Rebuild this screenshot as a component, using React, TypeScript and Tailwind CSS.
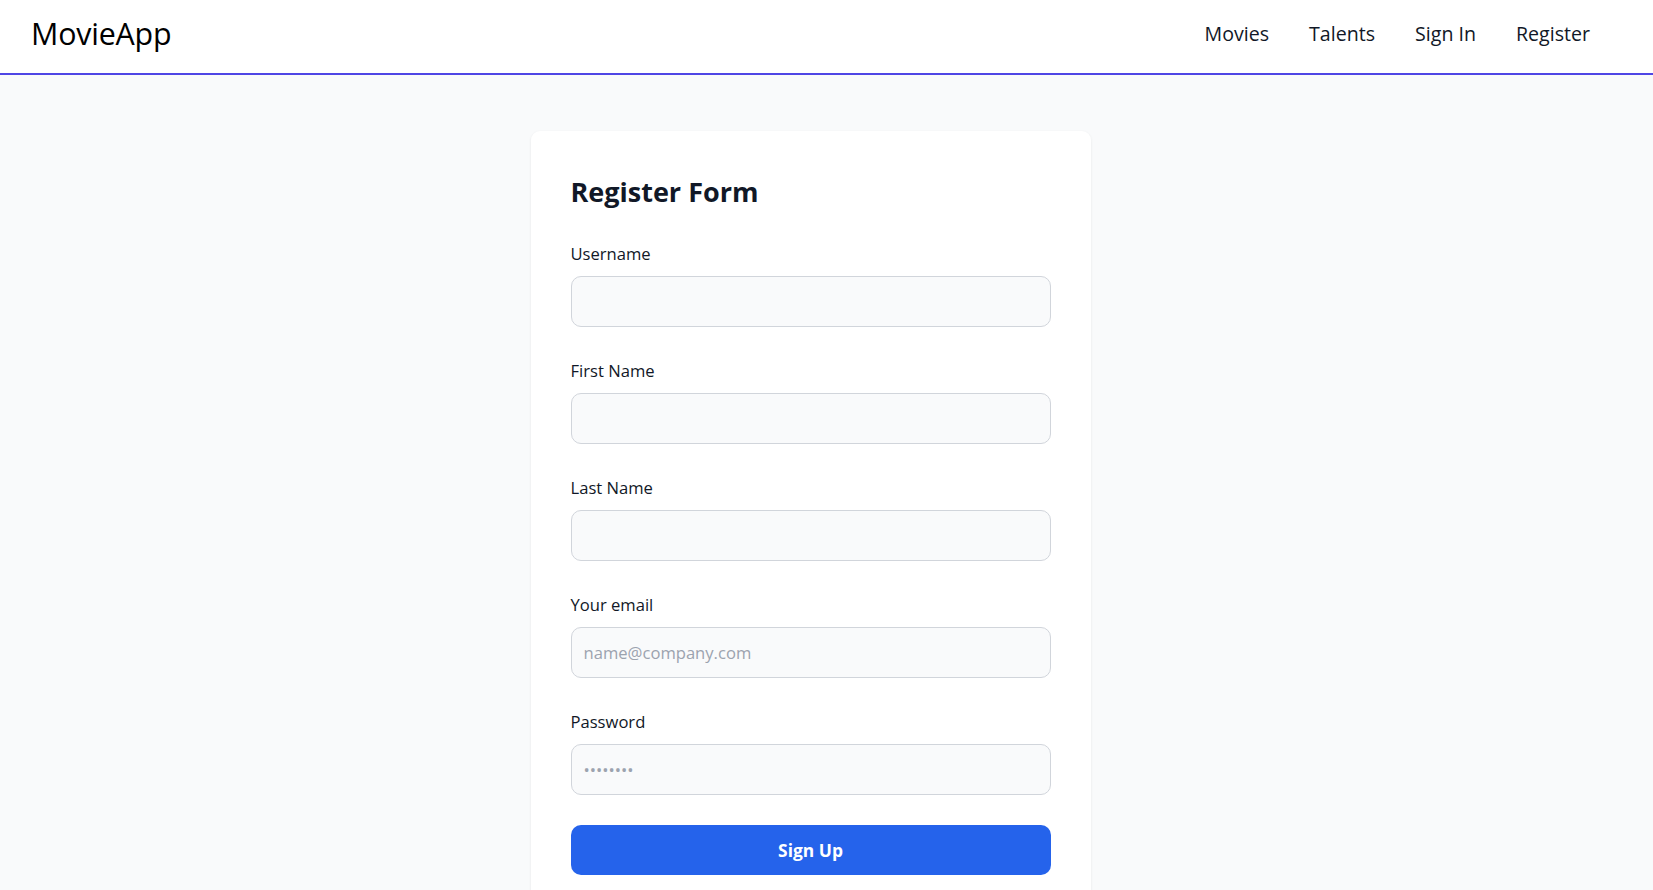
import React from "react";

const font = { fontFamily: "'Open Sans', 'Noto Sans', sans-serif" };

function Field({ label, type = "text", placeholder }: { label: string; type?: string; placeholder?: string }) {
  return (
    <div className="flex flex-col">
      <label className="block h-[24px] leading-[24px] mb-[10px] text-[16.6px] font-medium text-[#111827]">{label}</label>
      <input
        type={type}
        placeholder={placeholder}
        className="h-[51px] w-full rounded-[10px] border border-[#d1d5db] bg-[#f9fafb] px-[12px] text-[16.6px] text-[#111827] placeholder:text-[#9ca3af] outline-none"
      />
    </div>
  );
}

export default function App() {
  return (
    <div className="min-h-[890px] bg-[#f9fafb]" style={font}>
      <header className="flex h-[75px] items-center justify-between border-b-2 border-[#4f46e5] bg-white pb-[5px] pl-[31px] pr-[63px]">
        <div className="text-[30.4px] font-medium text-black tracking-[-0.2px]">MovieApp</div>
        <nav className="flex items-center gap-[40px] text-[19.6px] text-[#111827]">
          <a>Movies</a>
          <a>Talents</a>
          <a>Sign In</a>
          <a>Register</a>
        </nav>
      </header>
      <main className="flex justify-center pr-[32px] pt-[56px]">
        <div className="w-[560px] rounded-[9px] bg-white px-[40px] pt-[42px] pb-[40px] shadow-[0_1px_3px_rgba(0,0,0,0.08)]">
          <h1 className="text-[27px] font-bold leading-[38px] text-[#111827]">Register Form</h1>
          <form className="mt-[31px] flex flex-col gap-[32px]" onSubmit={(e) => e.preventDefault()}>
            <Field label="Username" />
            <Field label="First Name" />
            <Field label="Last Name" />
            <Field label="Your email" type="email" placeholder="name@company.com" />
            <Field label="Password" type="password" placeholder="••••••••" />
          </form>
          <button className="mt-[30px] h-[50px] w-full rounded-[10px] bg-[#2563eb] text-[17.4px] font-bold text-white">
            Sign Up
          </button>
        </div>
      </main>
    </div>
  );
}
